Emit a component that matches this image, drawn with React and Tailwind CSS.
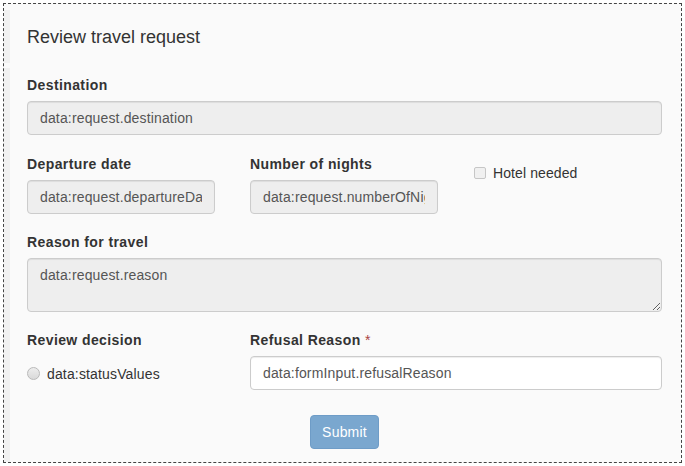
import React from "react";

function Label({ children, className = "" }) {
  return (
    <div className={"h-[20px] leading-[20px] font-bold text-[14px] tracking-[0.4px] text-[#333] whitespace-nowrap " + className}>
      {children}
    </div>
  );
}

function ROInput({ value, className = "", white = false }) {
  return (
    <input
      readOnly
      value={value}
      className={
        "block h-[34px] px-[12px] py-[6px] text-[14px] leading-[20px] tracking-[0.15px] text-[#555] border border-[#ccc] rounded-[4px] shadow-[inset_0_1px_1px_rgba(0,0,0,0.075)] outline-none " +
        (white ? "bg-white " : "bg-[#eee] ") +
        className
      }
      style={{ fontFamily: "'Liberation Sans', Arial, sans-serif" }}
    />
  );
}

export default function App() {
  return (
    <div
      className="w-[685px] h-[466px] bg-white p-[3px] text-[14px] text-[#333]"
      style={{ fontFamily: "'Liberation Sans', Arial, sans-serif" }}
    >
      <div className="h-[460px] border border-dashed border-[#444] bg-[#fafafa] flex">
        <div className="w-[6px] flex flex-col pt-[6px]">
          <div className="h-[53px] bg-[#f1f1f1]" />
          <div className="h-[5px]" />
          <div className="flex-1 bg-[#f1f1f1]" />
        </div>
        <div className="w-[635px] ml-[17px] pt-[20px]">
          <div className="h-[26px] leading-[26px] text-[18px] text-[#333]">Review travel request</div>

          <div className="mt-[25px]">
            <Label className="mb-[6px]">Destination</Label>
            <ROInput value="data:request.destination" className="w-[635px]" />
          </div>

          <div className="mt-[19px] flex">
            <div className="w-[223px]">
              <Label className="mb-[6px]">Departure date</Label>
              <ROInput value="data:request.departureDate" className="w-[188px]" />
            </div>
            <div className="w-[223px]">
              <Label className="mb-[6px]">Number of nights</Label>
              <ROInput value="data:request.numberOfNights" className="w-[188px]" />
            </div>
            <div className="pt-[4px] flex items-center h-[34px]">
              <span className="w-[12px] h-[12px] rounded-[2px] border border-[#c6c6c6] bg-[#f0f0f0] ml-[1px]" />
              <span className="ml-[7px] leading-[20px] tracking-[0.1px] text-[#333]">Hotel needed</span>
            </div>
          </div>

          <div className="mt-[18px]">
            <Label className="mb-[6px]">Reason for travel</Label>
            <textarea
              readOnly
              value="data:request.reason"
              className="block w-[635px] h-[54px] px-[12px] py-[6px] text-[14px] leading-[20px] tracking-[0.15px] text-[#555] bg-[#eee] border border-[#ccc] rounded-[4px] shadow-[inset_0_1px_1px_rgba(0,0,0,0.075)] outline-none resize-y"
              style={{ fontFamily: "'Liberation Sans', Arial, sans-serif" }}
            />
          </div>

          <div className="mt-[18px] flex">
            <div className="w-[223px]">
              <Label className="mb-[6px]">Review decision</Label>
              <div className="flex items-center h-[34px] pt-[1px]">
                <span className="w-[13px] h-[13px] rounded-full border border-[#b9b9b9] bg-gradient-to-b from-[#ededed] to-[#d9d9d9]" />
                <span className="ml-[7px] leading-[20px] tracking-[0.15px] text-[#333]">data:statusValues</span>
              </div>
            </div>
            <div className="flex-1">
              <Label className="mb-[6px]">
                Refusal Reason <span className="text-[#a94442] font-normal">*</span>
              </Label>
              <ROInput value="data:formInput.refusalReason" white className="w-[412px]" />
            </div>
          </div>

          <div className="mt-[25px] flex justify-center">
            <button className="w-[69px] h-[34px] rounded-[4px] bg-[#7aa7cf] border border-[#6e9cc7] text-white text-[14px] leading-[20px] tracking-[0.2px]">
              Submit
            </button>
          </div>
        </div>
      </div>
    </div>
  );
}
